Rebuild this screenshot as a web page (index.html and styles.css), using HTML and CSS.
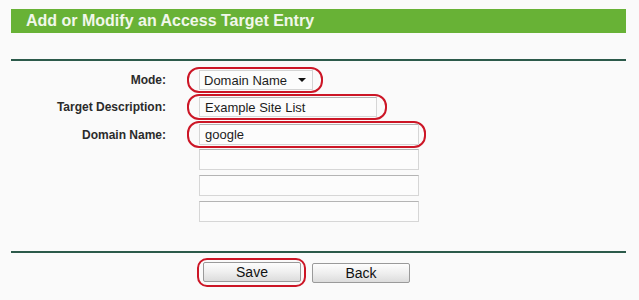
FILE: index.html
```html
<!DOCTYPE html>
<html lang="en">
<head>
    <meta charset="UTF-8">
    <title>Access Target Entry</title>
    <link rel="stylesheet" href="styles.css">
</head>
<body>
    <div class="panel">
        <div class="title">Add or Modify an Access Target Entry</div>
        <div class="rule"></div>

        <div class="form">
            <div class="form-row">
                <label for="mode">Mode:</label>
                <span class="mark">
                    <span class="select-box">
                        <select id="mode">
                            <option>Domain Name</option>
                            <option>IP Address</option>
                        </select>
                    </span>
                </span>
            </div>
            <div class="form-row row-target">
                <label for="desc">Target Description:</label>
                <span class="mark">
                    <input type="text" class="field field-desc" id="desc" value="Example Site List">
                </span>
            </div>
            <div class="form-row row-domain">
                <label for="domain1">Domain Name:</label>
                <span class="mark mark-tight">
                    <input type="text" class="field field-wide" id="domain1" value="google">
                </span>
            </div>
            <div class="form-row row-extra">
                <label></label>
                <input type="text" class="field field-wide plain" id="domain2">
            </div>
            <div class="form-row row-extra">
                <label></label>
                <input type="text" class="field field-wide plain" id="domain3">
            </div>
            <div class="form-row row-extra">
                <label></label>
                <input type="text" class="field field-wide plain" id="domain4">
            </div>
        </div>

        <div class="rule rule-bottom"></div>

        <div class="buttons">
            <span class="mark mark-button">
                <button>Save</button>
            </span>
            <button class="back">Back</button>
        </div>
    </div>
</body>
</html>
```

FILE: styles.css
```css
body {
    margin: 0;
    background-color: #fafafa;
    font-family: 'Liberation Sans', Arial, sans-serif;
}

.panel {
    width: 615px;
    padding: 9px 0 0 11px;
}

.title {
    height: 24px;
    line-height: 24px;
    padding-left: 15px;
    background-color: #68b236;
    color: #f1f7ea;
    font-size: 16px;
    font-weight: bold;
}

.rule {
    margin-top: 26px;
    border-top: 2px solid #2c5a4a;
}

.rule-bottom {
    margin-top: 29px;
}

.form {
    margin-top: 6px;
}

.form-row {
    display: flex;
    align-items: center;
}

.form-row label {
    width: 155px;
    margin-right: 21px;
    text-align: right;
    font-size: 12px;
    font-weight: bold;
    color: #2b2b2b;
}

.row-target,
.row-domain {
    margin-top: 1px;
}

.row-extra {
    margin-top: 5px;
}

.row-domain + .row-extra {
    margin-top: 1px;
}

.mark {
    display: inline-flex;
    align-items: center;
    padding: 1px 8px 1px 10px;
    border: 2px solid #cc1626;
    border-radius: 12px;
}

.mark-tight {
    padding-right: 5px;
}

.select-box {
    position: relative;
    display: inline-block;
}

.select-box::after {
    content: "";
    position: absolute;
    right: 7px;
    top: 8px;
    border-left: 4px solid transparent;
    border-right: 4px solid transparent;
    border-top: 4px solid #111;
    pointer-events: none;
}

select {
    appearance: none;
    -webkit-appearance: none;
    width: 114px;
    height: 20px;
    padding: 0 0 0 4px;
    border: 1px solid #d4d4d4;
    border-radius: 0;
    background-color: #fcfcfc;
    font-family: 'Liberation Sans', Arial, sans-serif;
    font-size: 13px;
    color: #1c1c1c;
}

.field {
    box-sizing: border-box;
    height: 21px;
    padding: 0 5px;
    border: 1px solid #d6d6d6;
    border-top-color: #b4b4b4;
    background-color: #fcfcfc;
    font-family: 'Liberation Sans', Arial, sans-serif;
    font-size: 13px;
    color: #1c1c1c;
    outline: none;
}

.field-desc {
    width: 178px;
    height: 20px;
}

.field-wide {
    width: 220px;
}

.plain {
    margin-left: 12px;
}

.buttons {
    display: flex;
    align-items: center;
    margin-top: 5px;
    padding-left: 186px;
}

.mark-button {
    padding: 2px 3px 3px 4px;
    border-radius: 10px;
}

button {
    width: 98px;
    height: 20px;
    padding: 0;
    border: 1px solid #9a9a9a;
    border-radius: 2px;
    background: linear-gradient(#fdfdfd, #efefef 50%, #dcdcdc);
    font-family: 'Liberation Sans', Arial, sans-serif;
    font-size: 14px;
    color: #111;
}

.back {
    margin-left: 6px;
}
```
